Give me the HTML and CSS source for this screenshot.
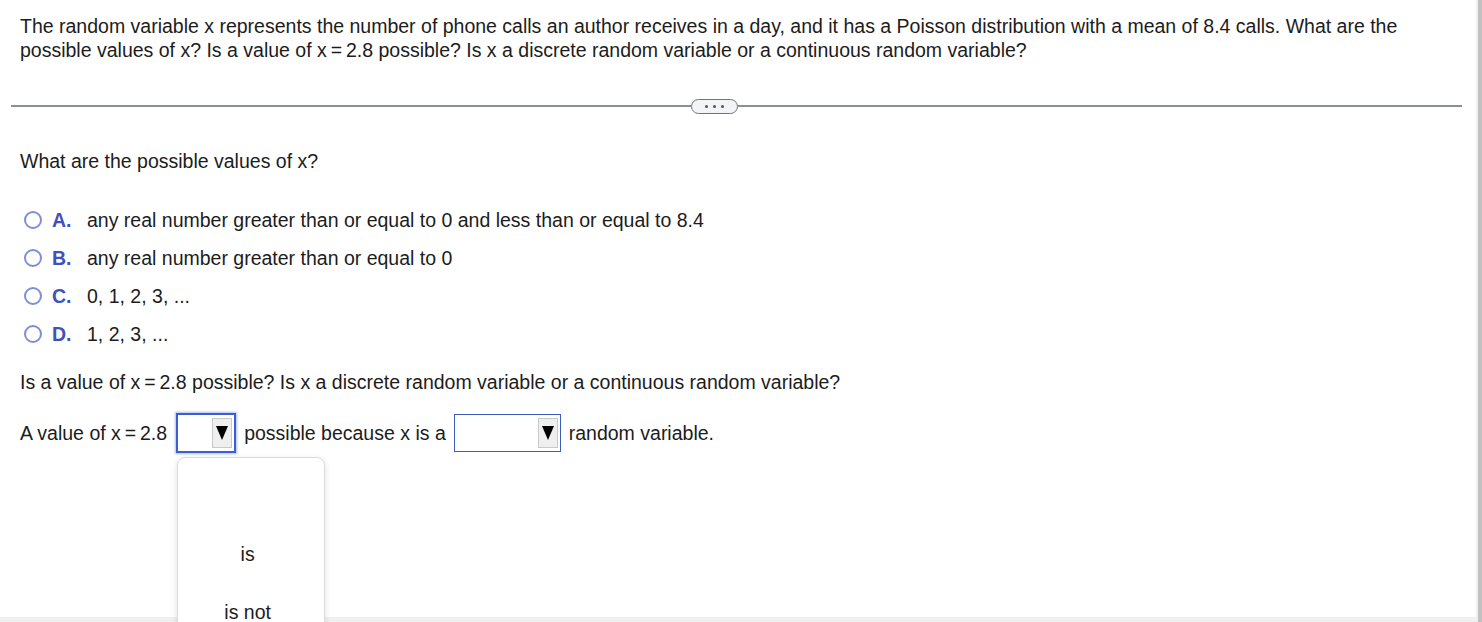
FILE: index.html
```html
<!DOCTYPE html>
<html>
<head>
<meta charset="utf-8">
<link rel="stylesheet" href="styles.css">
</head>
<body>
<div class="frame">
  <div class="content">
    <div class="scroll">
      <p class="question">The random variable x represents the number of phone calls an author receives in a day, and it has a Poisson distribution with a mean of 8.4 calls. What are the possible values of x? Is a value of x&#8201;=&#8201;2.8 possible? Is x a discrete random variable or a continuous random variable?</p>
      <div class="divider">
        <span class="line line-left"></span>
        <span class="more"><i></i><i></i><i></i></span>
        <span class="line line-right"></span>
      </div>
      <p class="prompt">What are the possible values of x?</p>
      <ul class="options">
        <li class="option"><span class="radio"></span><span class="letter">A.</span><span class="text">any real number greater than or equal to 0 and less than or equal to 8.4</span></li>
        <li class="option"><span class="radio"></span><span class="letter">B.</span><span class="text">any real number greater than or equal to 0</span></li>
        <li class="option"><span class="radio"></span><span class="letter">C.</span><span class="text">0, 1, 2, 3, ...</span></li>
        <li class="option"><span class="radio"></span><span class="letter">D.</span><span class="text">1, 2, 3, ...</span></li>
      </ul>
      <p class="prompt2">Is a value of x&#8201;=&#8201;2.8 possible? Is x a discrete random variable or a continuous random variable?</p>
      <div class="answer">
        <span class="lead">A value of x&#8201;=&#8201;2.8</span>
        <span class="select select-focus"><span class="arrow"><svg width="12" height="14" viewBox="0 0 12 14"><polygon points="0,0 12,0 6,14" fill="#000"/></svg></span>
          <div class="popup">
            <div class="popup-item first">is</div>
            <div class="popup-item">is not</div>
          </div>
        </span>
        <span>possible because x is a</span>
        <span class="select select-wide"><span class="arrow"><svg width="12" height="14" viewBox="0 0 12 14"><polygon points="0,0 12,0 6,14" fill="#000"/></svg></span></span>
        <span>random variable.</span>
      </div>
    </div>
    <div class="bottom-band"></div>
  </div>
  <div class="scrollbar"></div>
</div>
</body>
</html>
```

FILE: styles.css
```css
html, body {
  margin: 0;
  padding: 0;
  background: #ffffff;
}
body {
  font-family: Arial, "Liberation Sans", sans-serif;
  color: #1c1c1c;
  font-size: 19.5px;
}
.frame {
  display: flex;
  width: 1482px;
  height: 622px;
  overflow: hidden;
}
.content {
  flex: 1;
  display: flex;
  flex-direction: column;
  min-width: 0;
}
.scroll {
  flex: 1;
  position: relative;
  min-height: 0;
}
.bottom-band {
  height: 5px;
  background: #f0f0f0;
}
.scrollbar {
  width: 6px;
  border-left: 2px solid #f0f0f0;
  box-sizing: border-box;
  background: #c1c1c1;
}
.question {
  margin: 0;
  padding: 14px 60px 0 20px;
  line-height: 24px;
}
.divider {
  display: flex;
  align-items: center;
  margin: 36px 0 0 11px;
  width: 1451px;
  height: 16px;
}
.line {
  height: 2px;
  background: #8a9098;
}
.line-left { width: 680px; }
.line-right { flex: 1; }
.more {
  width: 47px;
  height: 15px;
  box-sizing: border-box;
  border: 1px solid #6b7585;
  border-radius: 8px;
  background: #f3f4f6;
  display: flex;
  justify-content: center;
  align-items: center;
  gap: 5px;
}
.more i {
  display: block;
  width: 3px;
  height: 3px;
  border-radius: 50%;
  background: #4c5563;
}
.prompt {
  margin: 35px 0 0 20px;
  line-height: 24px;
}
.options {
  list-style: none;
  margin: 28px 0 0 0;
  padding: 0 0 0 24px;
}
.option {
  display: flex;
  align-items: center;
  height: 38px;
}
.radio {
  width: 18px;
  height: 18px;
  box-sizing: border-box;
  border: 2px solid #7d8fd8;
  border-radius: 50%;
  margin-right: 10px;
}
.letter {
  font-weight: bold;
  color: #3f51c0;
  width: 35px;
}
.prompt2 {
  margin: 17px 0 0 20px;
  line-height: 24px;
}
.answer {
  display: flex;
  align-items: center;
  gap: 8px;
  margin: 19px 0 0 20px;
  height: 40px;
}
.lead {
  margin-right: 1px;
}
.select {
  position: relative;
  display: flex;
  justify-content: flex-end;
  align-items: center;
  box-sizing: border-box;
  height: 38px;
  border: 1px solid #3a5cba;
  padding-right: 2px;
}
.select-focus {
  width: 60px;
  height: 40px;
  border: 2px solid #3c5fd0;
  box-shadow: 0 0 2px 1px rgba(80, 110, 230, 0.45);
}
.select-wide {
  width: 107px;
}
.arrow {
  width: 20px;
  height: 30px;
  box-sizing: border-box;
  background: #efefef;
  border: 1px solid #c9c9c9;
  display: flex;
  justify-content: center;
  align-items: center;
}
.popup {
  position: absolute;
  left: -1px;
  top: 42px;
  width: 148px;
  height: 200px;
  box-sizing: border-box;
  padding-right: 7px;
  background: #ffffff;
  border: 1px solid #dcdcdc;
  border-radius: 8px;
  box-shadow: 0 2px 6px rgba(0, 0, 0, 0.12);
  z-index: 5;
}
.popup-item {
  text-align: center;
  line-height: 24px;
  margin-top: 34px;
}
.popup-item.first {
  margin-top: 84px;
}
```
